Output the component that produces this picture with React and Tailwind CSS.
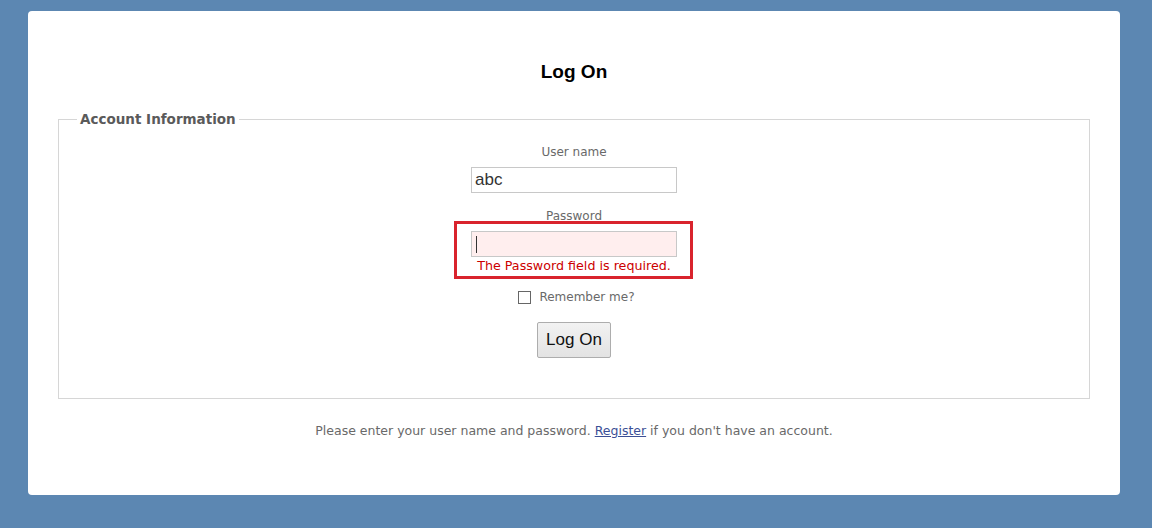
import React from "react";

export default function App() {
  return (
    <div
      className="w-[1152px] h-[528px] bg-[#5c87b2] pt-[11px] pl-[28px] pr-[32px] pb-[33px] text-[#696969]"
      style={{ fontFamily: '"DejaVu Sans", Tahoma, Verdana, sans-serif' }}
    >
      <div className="h-[484px] bg-white rounded-[4px] px-[30px] pt-[46px]">
        <h2
          className="h-[30px] leading-[30px] text-center text-[19px] font-bold text-black"
          style={{ fontFamily: '"Liberation Sans", Arial, sans-serif' }}
        >
          Log On
        </h2>

        {/* Account form */}
        <fieldset className="mt-[24px] border border-[#d6d6d6] px-[18px] pb-[40px]">
          <legend className="px-[3px] text-[13.5px] leading-[17px] font-bold text-[#5a5a5a]">
            Account Information
          </legend>

          <div className="flex flex-col items-center">
            <label className="mt-[14px] h-[20px] leading-[20px] text-[12px]">User name</label>
            <input
              defaultValue="abc"
              className="mt-[5px] w-[206px] h-[26px] border border-[#c8c8c8] px-[3px] text-[17px] text-[#333] outline-none"
              style={{ fontFamily: '"Liberation Sans", Arial, sans-serif' }}
            />

            <label className="mt-[13px] h-[20px] leading-[20px] text-[12px]">Password</label>
            <div className="relative mt-[5px] flex flex-col items-center">
              <div className="w-[206px] h-[26px] border border-[#c8c8c8] bg-[#ffeeee] flex items-center pl-[4px]">
                <span className="w-px h-[17px] bg-[#333]" />
              </div>
              <span className="mt-px h-[16px] leading-[16px] text-[12.7px] text-[#c00]">
                The Password field is required.
              </span>
              {/* highlight annotation */}
              <div className="absolute left-[-17px] top-[-10px] w-[239px] h-[58px] border-[3px] border-[#d9232d]" />
            </div>

            <div className="mt-[15px] h-[16px] flex items-center gap-[8px] text-[12px] pl-[5px]">
              <span className="w-[13px] h-[13px] border border-[#666] bg-white" />
              <span>Remember me?</span>
            </div>

            <button
              className="mt-[17px] w-[74px] h-[36px] border border-[#adadad] rounded-[2px] bg-gradient-to-b from-[#f2f2f2] to-[#e3e3e3] text-[17px] text-[#111]"
              style={{ fontFamily: '"Liberation Sans", Arial, sans-serif' }}
            >
              Log On
            </button>
          </div>
        </fieldset>

        <p className="mt-[22px] text-center text-[12.5px] leading-[20px]">
          Please enter your user name and password.{" "}
          <a href="#" className="text-[#3b4f96] underline">Register</a> if you don't have an account.
        </p>
      </div>
    </div>
  );
}
